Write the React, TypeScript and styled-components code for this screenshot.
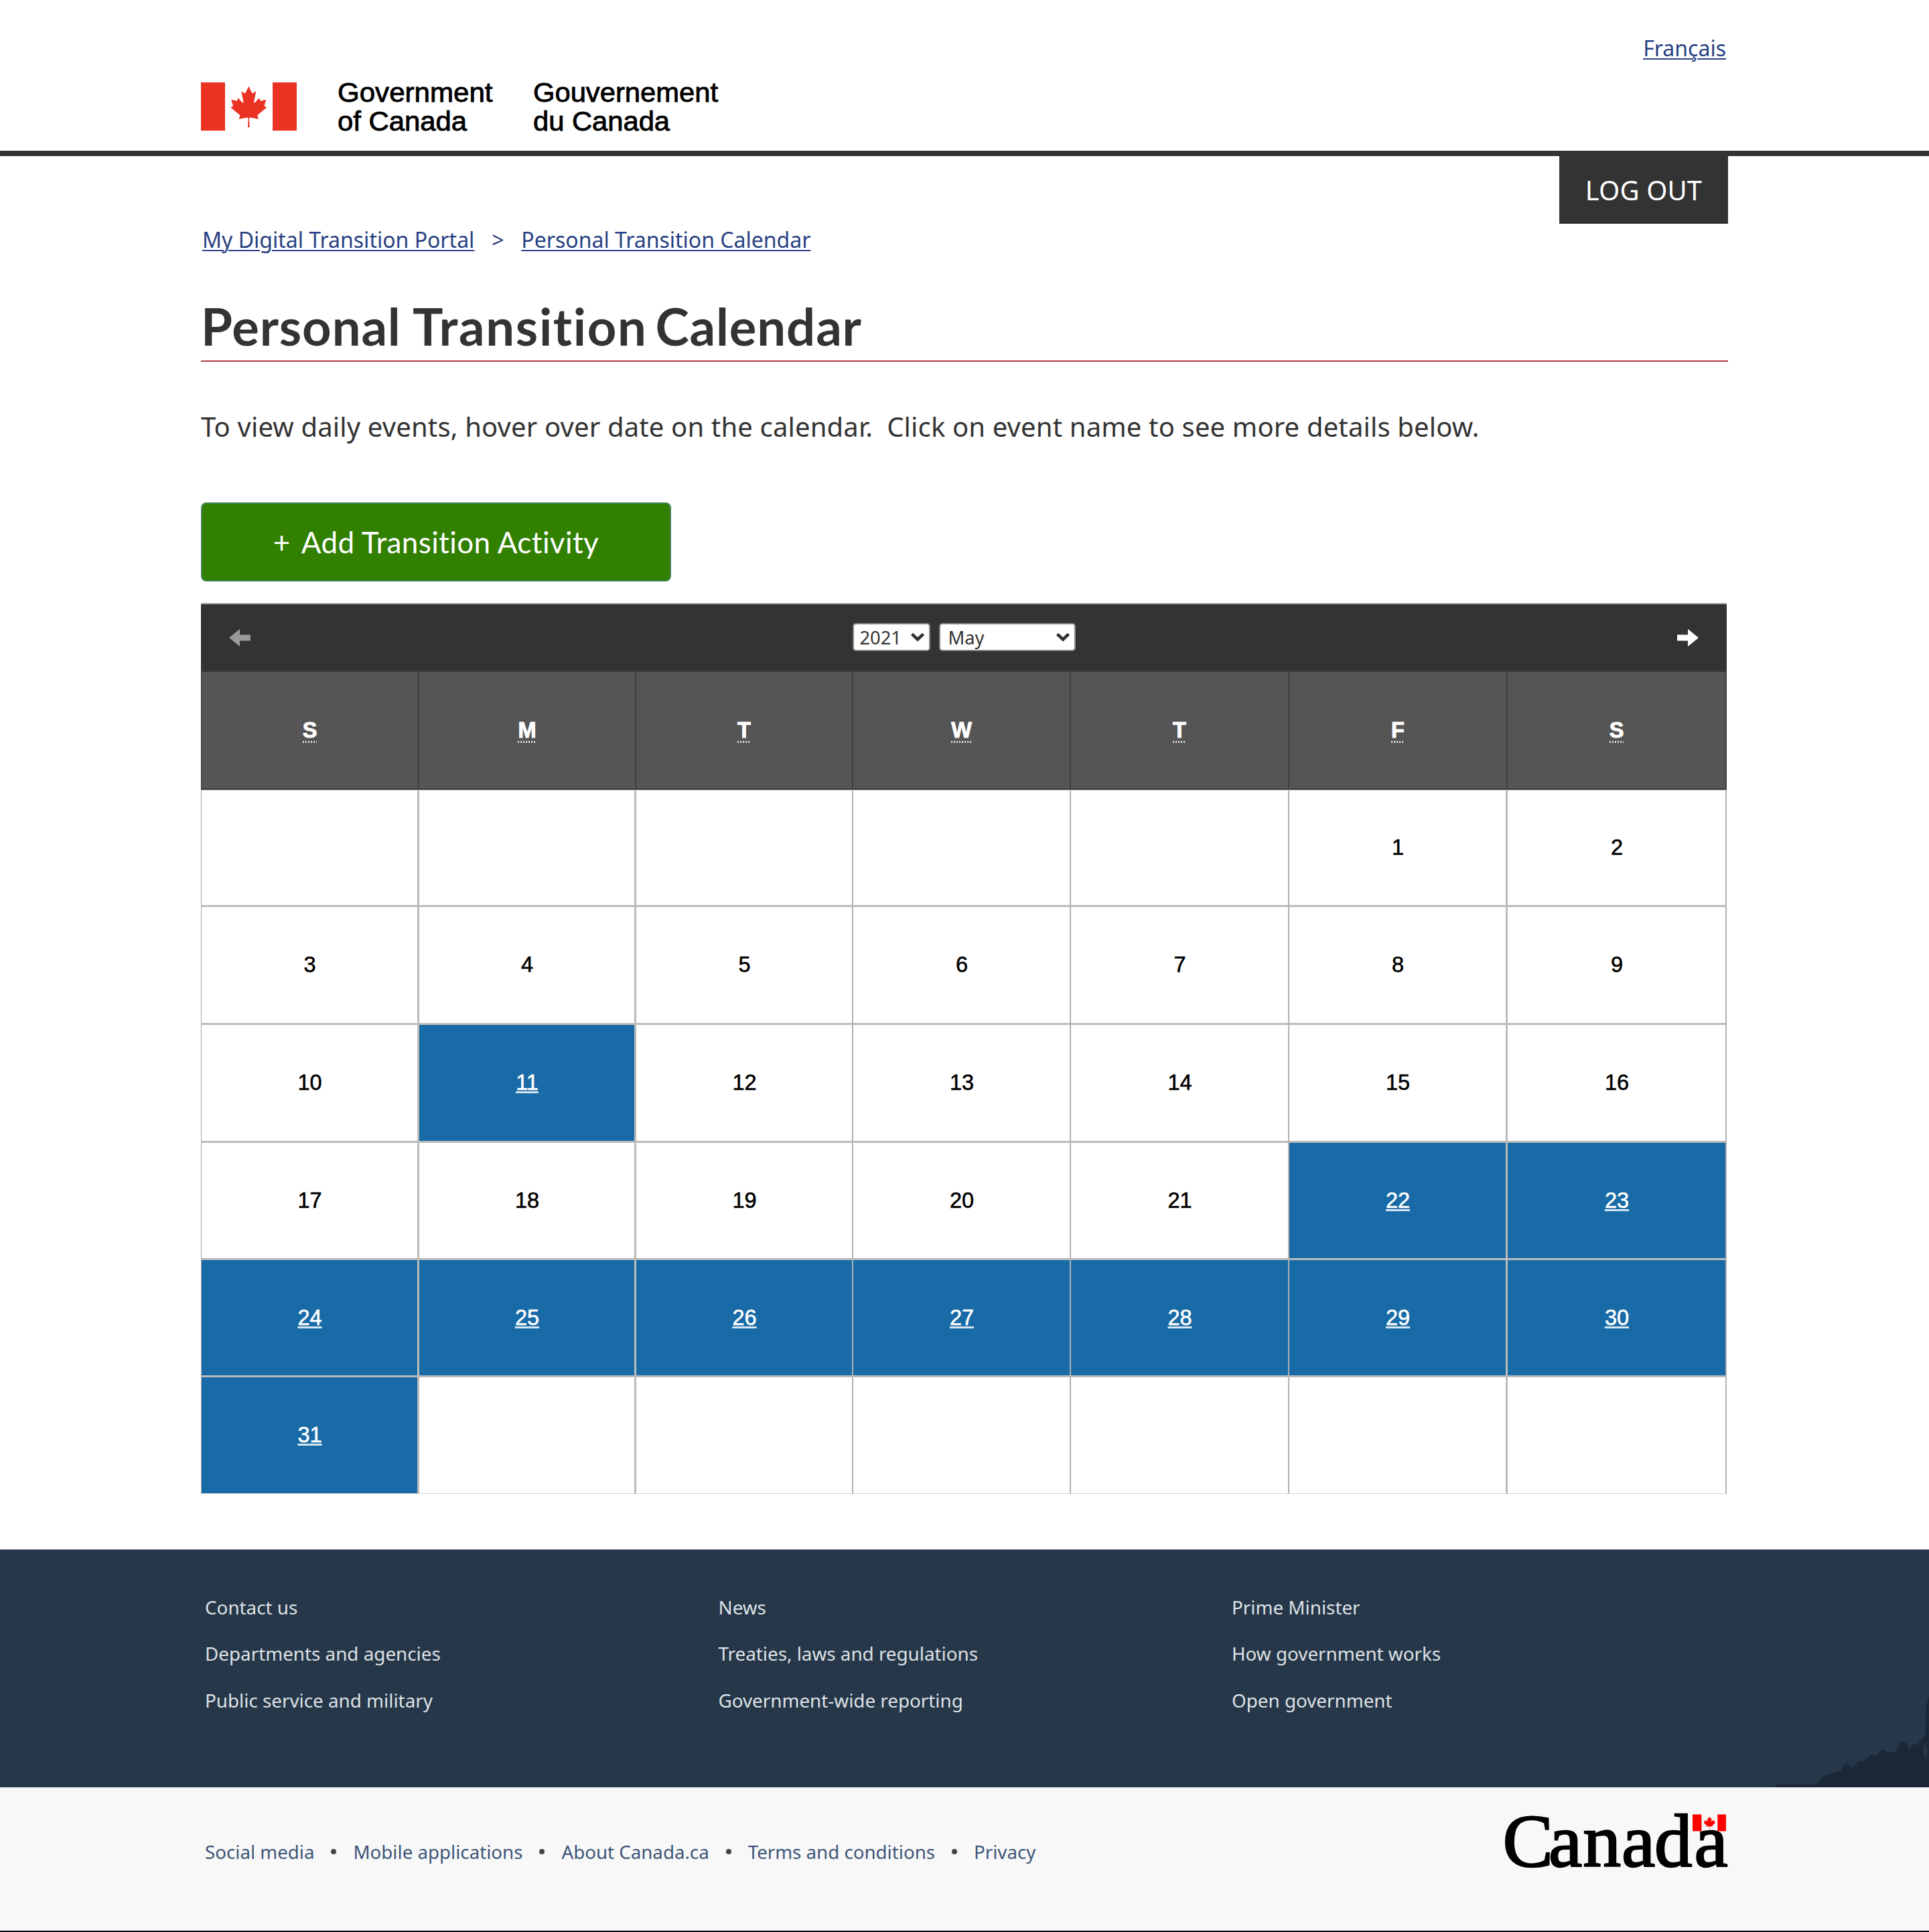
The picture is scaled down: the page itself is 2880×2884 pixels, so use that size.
import React from "react";
import styled, { createGlobalStyle } from "styled-components";

const Global = createGlobalStyle`
  *, *::before, *::after { box-sizing: border-box; }
  html, body { margin: 0; padding: 0; background: #fff; }
  body { font-family: "Noto Sans", sans-serif; color: #333; }
  a { color: inherit; }
`;

const LEAF =
  "m-90 2030 45-863a95 95 0 0 0-111-98l-859 151 116-320a65 65 0 0 0-20-73l-941-762 212-99a65 65 0 0 0 34-79l-186-572 542 115a65 65 0 0 0 73-38l105-247 423 454a65 65 0 0 0 111-57l-204-1052 327 189a65 65 0 0 0 91-27l332-652 332 652a65 65 0 0 0 91 27l327-189-204 1052a65 65 0 0 0 111 57l423-454 105 247a65 65 0 0 0 73 38l542-115-186 572a65 65 0 0 0 34 79l212 99-941 762a65 65 0 0 0-20 73l116 320-859-151a95 95 0 0 0-111 98l45 863z";

const Page = styled.div`
  width: 2880px;
  height: 2884px;
  overflow: hidden;
  display: flex;
  flex-direction: column;
  background: #fff;
`;

const Header = styled.header`
  height: 233px;
  flex: none;
  border-bottom: 8px solid #333;
  padding: 50px 303px 0 300px;
  display: flex;
  flex-direction: column;
  gap: 29px;
`;

const LanguageRow = styled.div`
  display: flex;
  justify-content: flex-end;
  height: 44px;
`;

const TextLink = styled.a`
  font-size: 32px;
  line-height: 44px;
  color: #284182;
  text-decoration: underline;
  text-decoration-thickness: 2px;
  text-underline-offset: 3px;
  white-space: nowrap;
`;

const Signature = styled.svg`
  display: block;
  width: 800px;
  height: 76px;
  overflow: visible;
  font-family: "Liberation Sans", Arial, sans-serif;
  font-size: 41.5px;
  fill: #000;
`;

const Main = styled.main`
  padding: 0 300px;
  display: flex;
  flex-direction: column;
`;

const LogOut = styled.button`
  align-self: flex-end;
  width: 252px;
  height: 101px;
  padding: 0;
  border: 0;
  background: #333;
  color: #fff;
  font-family: inherit;
  font-size: 40px;
  letter-spacing: 0.1px;
`;

const Breadcrumb = styled.nav`
  display: flex;
  margin-top: 2px;
  padding-left: 2px;
`;

const Separator = styled.span`
  width: 70px;
  text-align: center;
  font-size: 32px;
  line-height: 44px;
  color: #284182;
`;

const Title = styled.h1`
  margin: 62px 0 0;
  padding-bottom: 6px;
  border-bottom: 2px solid #af3c43;
  font-family: Lato, sans-serif;
  font-weight: 700;
  font-size: 76px;
  line-height: 90px;
  letter-spacing: 0.9px;
  word-spacing: -2px;
  font-variant-ligatures: none;
  white-space: nowrap;
`;

const WideWord = styled.span`
  letter-spacing: 1.65px;
  margin-right: -5.5px;
`;

const Intro = styled.p`
  margin: 67px 0 0;
  font-size: 40px;
  line-height: 60px;
  letter-spacing: 0.15px;
  white-space: pre;
`;

const AddButton = styled.button`
  margin-top: 83px;
  width: 702px;
  height: 118px;
  padding: 0;
  border: 2px solid #458259;
  border-radius: 8px;
  background: #318000;
  color: #fff;
  font-family: Lato, sans-serif;
  font-size: 44px;
  letter-spacing: 0.4px;
  font-variant-ligatures: none;
  display: flex;
  align-items: center;
  justify-content: center;
  gap: 16px;
`;

const Calendar = styled.section`
  margin-top: 32px;
  width: 2278px;
  border-top: 2px solid #aaa;
`;

const CalendarNav = styled.div`
  height: 98px;
  padding: 0 42px;
  background: #333;
  display: flex;
  align-items: center;
  justify-content: space-between;
`;

const Arrow = styled.svg<{ $muted?: boolean }>`
  width: 32px;
  height: 26px;
  margin-top: 2px;
  fill: ${(p) => (p.$muted ? "#999" : "#fff")};
`;

const Selects = styled.div`
  display: flex;
  gap: 13px;
`;

const SelectBox = styled.div<{ $width: number; $inset: number }>`
  width: ${(p) => p.$width}px;
  height: 42px;
  padding: 1px 7px 0 ${(p) => p.$inset}px;
  border: 2px solid #858585;
  border-radius: 5px;
  background: #fff;
  display: flex;
  align-items: center;
  justify-content: space-between;
  font-size: 27.3px;
  line-height: 38px;
  color: #333;
`;

const Chevron = styled.svg`
  width: 20px;
  height: 14px;
  margin-bottom: 2px;
  fill: none;
  stroke: #333;
  stroke-width: 4.6;
`;

const Grid = styled.div`
  display: grid;
  grid-template-columns: 325px 324px 324px 325px 326px 326px 327px;
  border-left: 1px solid #a5a5a5;
`;

const WeekdayGrid = styled(Grid)`
  height: 179px;
  border-left-color: #333;
  border-top: 3px solid #393939;
  border-bottom: 2px solid #3c3c3c;
`;

const DayGrid = styled(Grid)`
  grid-template-rows: 174px 176px 176px 175px 175px 174px;
  border-top: 1px solid #c4c4c4;
`;

const cellFont = `
  display: flex;
  align-items: center;
  justify-content: center;
  font-family: "Liberation Sans", Arial, sans-serif;
  font-size: 32.5px;
`;

const Weekday = styled.div`
  ${cellFont}
  background: #555;
  color: #fff;
  font-weight: 700;
  border-right: 2px solid #404040;
  -webkit-text-stroke: 1px #fff;
`;

const WeekdayLabel = styled.abbr`
  line-height: 34px;
  padding-bottom: 2px;
  margin-top: 2px;
  background: repeating-linear-gradient(90deg, #ddd 0 2px, transparent 2px 4px) 0 100% / 100% 3px no-repeat;
`;

const Day = styled.div<{ $busy: boolean; $last: boolean }>`
  ${cellFont}
  padding-left: 1px;
  background: ${(p) => (p.$busy ? "#186ba7" : "#fff")};
  color: ${(p) => (p.$busy ? "#fff" : "#000")};
  border-right: 2px solid #b0b0b0;
  border-bottom: ${(p) => (p.$last ? "1px solid #cfcfcf" : "3px solid #bbb")};
  -webkit-text-stroke: 0.6px currentColor;

  &:nth-child(7n + 1),
  &:nth-child(7n + 2),
  &:nth-child(7n + 6) {
    border-right: 3px solid #bbb;
  }
`;

const DayLink = styled.a`
  text-decoration: underline;
  text-decoration-color: #d5e4f0;
  text-decoration-thickness: 3px;
  text-underline-offset: 2px;
  text-decoration-skip-ink: none;
`;

const Footer = styled.footer`
  margin-top: 82.5px;
  flex: none;
`;

const FooterMain = styled.div`
  height: 355px;
  background: #26374a;
  display: flex;
  justify-content: space-between;
  align-items: flex-end;
`;

const FooterColumns = styled.div`
  align-self: flex-start;
  display: grid;
  grid-template-columns: 766.5px 766.5px 600px;
  padding: 52px 0 0 306px;
`;

const FooterColumn = styled.div`
  display: flex;
  flex-direction: column;
`;

const FooterLink = styled.a`
  font-size: 27.8px;
  line-height: 69.7px;
  color: #dfe2e5;
  text-decoration: none;
  white-space: nowrap;
`;

const Skyline = styled.svg`
  display: block;
  width: 229px;
  height: 139px;
`;

const FooterBrand = styled.div`
  height: 214.5px;
  background: #f8f8f8;
  padding: 40px 300px 0 306px;
  display: flex;
  justify-content: space-between;
  align-items: flex-start;
`;

const BrandLinks = styled.div`
  margin-top: 36.5px;
  display: flex;
  align-items: center;
`;

const BrandLink = styled.a`
  font-size: 27.7px;
  line-height: 40px;
  color: #3d5578;
  text-decoration: none;
  white-space: nowrap;
`;

const Dot = styled.span`
  width: 8px;
  height: 8px;
  margin: 0 25px;
  border-radius: 50%;
  background: #444;
`;

const Wordmark = styled.svg`
  display: block;
  width: 335px;
  height: 80px;
  overflow: visible;
  font-family: "Liberation Serif", "Times New Roman", serif;
  font-size: 113px;
`;

const BottomStrip = styled.div`
  height: 3px;
  background: #050a18;
`;

const weekdays = ["S", "M", "T", "W", "T", "F", "S"];
const cells: (number | null)[] = Array.from({ length: 42 }, (_, i) =>
  i >= 5 && i < 36 ? i - 4 : null
);
const isBusy = (d: number | null) => d !== null && (d === 11 || d >= 22);

const footerColumns = [
  ["Contact us", "Departments and agencies", "Public service and military"],
  ["News", "Treaties, laws and regulations", "Government-wide reporting"],
  ["Prime Minister", "How government works", "Open government"],
];
const brandLinks = ["Social media", "Mobile applications", "About Canada.ca", "Terms and conditions", "Privacy"];

function GovernmentSignature() {
  return (
    <Signature viewBox="300 123 800 76">
      <g fill="#ea3323">
        <rect x="300" y="123" width="36" height="72" />
        <rect x="407" y="123" width="36" height="72" />
        <path d={LEAF} transform="translate(371.3 159.2) scale(.0145 .0152)" />
      </g>
      <g stroke="#000" strokeWidth="0.9">
        <text x="504" y="152" textLength="231.5" lengthAdjust="spacingAndGlyphs">Government</text>
        <text x="504" y="195" textLength="193" lengthAdjust="spacingAndGlyphs">of Canada</text>
        <text x="796" y="152" textLength="276" lengthAdjust="spacingAndGlyphs">Gouvernement</text>
        <text x="796" y="195" textLength="204" lengthAdjust="spacingAndGlyphs">du Canada</text>
      </g>
    </Signature>
  );
}

function CanadaWordmark() {
  return (
    <Wordmark viewBox="2245 2707 335 80">
      <text x="2243.5 2312 2363.5 2421 2470 2529.5" y="2785" fill="#000" stroke="#000" strokeWidth="2.4">
        Canada
      </text>
      <g fill="#f00">
        <rect x="2527" y="2707.5" width="13.4" height="25" />
        <rect x="2564.3" y="2707.5" width="12.6" height="25" />
        <path d={LEAF} transform="translate(2552.3 2720) scale(.0046 .0048)" />
      </g>
    </Wordmark>
  );
}

function MonthSelect({ label, width, inset }: { label: string; width: number; inset: number }) {
  return (
    <SelectBox $width={width} $inset={inset}>
      <span>{label}</span>
      <Chevron viewBox="0 0 20 14">
        <path d="M1.5 2.5 10 10.5 18.5 2.5" />
      </Chevron>
    </SelectBox>
  );
}

export default function App() {
  return (
    <>
      <Global />
      <Page>
        <Header>
          <LanguageRow>
            <TextLink>Français</TextLink>
          </LanguageRow>
          <GovernmentSignature />
        </Header>
        <Main>
          <LogOut>LOG OUT</LogOut>
          <Breadcrumb>
            <TextLink>My Digital Transition Portal</TextLink>
            <Separator>&gt;</Separator>
            <TextLink>Personal Transition Calendar</TextLink>
          </Breadcrumb>
          <Title>
            Personal <WideWord>Transition</WideWord> Calendar
          </Title>
          <Intro>{"To view daily events, hover over date on the calendar.  Click on event name to see more details below."}</Intro>
          <AddButton>
            <span>+</span>
            <span>Add Transition Activity</span>
          </AddButton>
          <Calendar>
            <CalendarNav>
              <Arrow $muted viewBox="0 0 32 26">
                <path d="M0 13 16 0V8.5H32V17.5H16V26Z" />
              </Arrow>
              <Selects>
                <MonthSelect label="2021" width={116} inset={9} />
                <MonthSelect label="May" width={204} inset={12} />
              </Selects>
              <Arrow viewBox="0 0 32 26">
                <path d="M32 13 16 0V8.5H0V17.5H16V26Z" />
              </Arrow>
            </CalendarNav>
            <WeekdayGrid>
              {weekdays.map((d, i) => (
                <Weekday key={i}>
                  <WeekdayLabel>{d}</WeekdayLabel>
                </Weekday>
              ))}
            </WeekdayGrid>
            <DayGrid>
              {cells.map((d, i) => (
                <Day key={i} $busy={isBusy(d)} $last={i >= 35}>
                  {isBusy(d) ? <DayLink>{d}</DayLink> : d}
                </Day>
              ))}
            </DayGrid>
          </Calendar>
        </Main>
        <Footer>
          <FooterMain>
            <FooterColumns>
              {footerColumns.map((links) => (
                <FooterColumn key={links[0]}>
                  {links.map((l) => (
                    <FooterLink key={l}>{l}</FooterLink>
                  ))}
                </FooterColumn>
              ))}
            </FooterColumns>
            <Skyline viewBox="1040 85 528 417" preserveAspectRatio="none">
              <path
                fill="#1b2737"
                d="M1040 502V491H1180L1196 470 1204 452 1216 443 1236 441 1250 434 1264 430 1272 405 1286 396 1298 406 1305 417 1314 400 1328 384 1342 387 1358 367 1370 357 1386 361 1396 343 1408 332 1424 344 1446 346 1458 335 1464 308 1478 293 1492 308 1498 334 1512 311 1528 310 1544 284 1555 270 1557 150 1568 88V502Z"
              />
              <path fill="#26374a" d="M1553 302 1558 330 1561 302 1562 360 1556 374 1549 350 1549 320Z" />
            </Skyline>
          </FooterMain>
          <FooterBrand>
            <BrandLinks>
              {brandLinks.map((l, i) => (
                <React.Fragment key={l}>
                  {i > 0 && <Dot />}
                  <BrandLink>{l}</BrandLink>
                </React.Fragment>
              ))}
            </BrandLinks>
            <CanadaWordmark />
          </FooterBrand>
          <BottomStrip />
        </Footer>
      </Page>
    </>
  );
}
